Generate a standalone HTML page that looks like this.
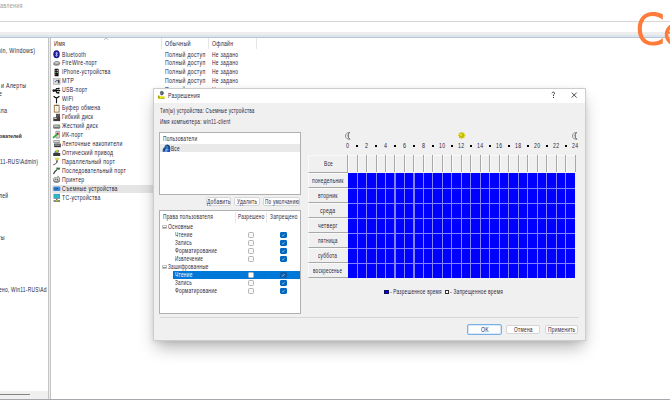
<!DOCTYPE html><html><head><meta charset="utf-8"><style>
*{box-sizing:border-box}
body{margin:0;width:670px;height:400px;position:relative;overflow:hidden;background:#fff;font-family:"Liberation Sans",sans-serif;color:#000}
.t{position:absolute;white-space:nowrap;line-height:1;transform-origin:0 0}
.p{position:absolute}
svg{position:absolute;overflow:visible}
</style></head><body>

<div class="t" style="left:-0.50px;top:2.60px;font-size:6.72px;color:#9a9a9a;letter-spacing:0.35px;transform:scaleX(0.803);">авления</div>
<div class="p" style="left:0;top:21px;width:670px;height:1px;background:#d6d6d6"></div>
<div class="p" style="left:0;top:32px;width:670px;height:6px;background:linear-gradient(#ededed 0,#ededed 45%,#dbe5f0 55%,#dbe5f0 80%,#a6b0ba 100%)"></div>
<div class="p" style="left:48px;top:38px;width:3px;height:361px;background:#ececec;border-left:1px solid #c4c4c4;border-right:1px solid #c4c4c4"></div>
<div class="p" style="left:0;top:38px;width:47px;height:353px;overflow:hidden">
<div class="t" style="left:-11.00px;top:9.60px;font-size:6.72px;color:#2a2638;letter-spacing:0.35px;transform:scaleX(0.804);">Admin, Windows)</div>
<div class="t" style="left:-26.00px;top:44.60px;font-size:6.72px;color:#2a2638;letter-spacing:0.35px;transform:scaleX(0.791);">Журналы и Алерты</div>
<div class="t" style="left:-7.80px;top:52.60px;font-size:6.72px;color:#2a2638;letter-spacing:0.35px;transform:scaleX(0.840);">ние</div>
<div class="t" style="left:-6.00px;top:70.00px;font-size:6.72px;color:#2a2638;letter-spacing:0.35px;transform:scaleX(0.811);">вила</div>
<div class="t" style="left:-3.50px;top:95.40px;font-size:6.09px;color:#2a2638;transform:scaleX(0.799);font-weight:bold">зователей</div>
<div class="t" style="left:-3.00px;top:120.60px;font-size:6.72px;color:#2a2638;letter-spacing:0.35px;transform:scaleX(0.748);">n11-RUS\Admin)</div>
<div class="t" style="left:-1.00px;top:154.80px;font-size:6.72px;color:#2a2638;letter-spacing:0.35px;transform:scaleX(0.743);">лей</div>
<div class="t" style="left:-2.50px;top:197.00px;font-size:6.72px;color:#2a2638;letter-spacing:0.35px;transform:scaleX(0.787);">ты</div>
<div class="t" style="left:-0.70px;top:248.70px;font-size:6.72px;color:#2a2638;letter-spacing:0.35px;transform:scaleX(0.725);">ено, Win11-RUS\Admin)</div>
</div>
<div class="p" style="left:0;top:391px;width:48px;height:8px;background:#f0f0f0"></div>
<div class="p" style="left:0;top:394px;width:30px;height:1.3px;background:#858585"></div>
<div class="p" style="left:0;top:398.5px;width:670px;height:1.5px;background:#a4a8ac"></div>
<div class="t" style="left:54.00px;top:41.20px;font-size:6.72px;color:#2a2638;letter-spacing:0.35px;transform:scaleX(0.798);">Имя</div>
<svg style="left:103px;top:37px" width="6" height="4"><path d="M0.8 3 L3 1 L5.2 3" stroke="#a0a8b0" stroke-width="0.7" fill="none"/></svg>
<div class="p" style="left:161px;top:38px;width:1px;height:11px;background:#e6e6e6"></div>
<div class="p" style="left:208px;top:38px;width:1px;height:11px;background:#e6e6e6"></div>
<div class="p" style="left:256px;top:38px;width:1px;height:11px;background:#e6e6e6"></div>
<div class="t" style="left:164.80px;top:41.20px;font-size:6.51px;color:#2a2638;letter-spacing:0.35px;transform:scaleX(0.829);">Обычный</div>
<div class="t" style="left:212.00px;top:41.20px;font-size:6.51px;color:#2a2638;letter-spacing:0.35px;transform:scaleX(0.787);">Офлайн</div>
<div class="p" style="left:52px;top:185px;width:102px;height:8px;background:#e5e5e5"></div>
<div class="t" style="left:61.60px;top:51.50px;font-size:6.30px;color:#2a2638;letter-spacing:0.35px;transform:scaleX(0.809);">Bluetooth</div>
<div class="t" style="left:164.80px;top:51.50px;font-size:6.30px;color:#2a2638;letter-spacing:0.35px;transform:scaleX(0.824);">Полный доступ</div>
<div class="t" style="left:211.90px;top:51.50px;font-size:6.30px;color:#2a2638;letter-spacing:0.35px;transform:scaleX(0.781);">Не задано</div>
<div class="t" style="left:61.60px;top:60.45px;font-size:6.30px;color:#2a2638;letter-spacing:0.35px;transform:scaleX(0.807);">FireWire-порт</div>
<div class="t" style="left:164.80px;top:60.45px;font-size:6.30px;color:#2a2638;letter-spacing:0.35px;transform:scaleX(0.824);">Полный доступ</div>
<div class="t" style="left:211.90px;top:60.45px;font-size:6.30px;color:#2a2638;letter-spacing:0.35px;transform:scaleX(0.781);">Не задано</div>
<div class="t" style="left:61.60px;top:69.40px;font-size:6.30px;color:#2a2638;letter-spacing:0.35px;transform:scaleX(0.810);">iPhone-устройства</div>
<div class="t" style="left:164.80px;top:69.40px;font-size:6.30px;color:#2a2638;letter-spacing:0.35px;transform:scaleX(0.824);">Полный доступ</div>
<div class="t" style="left:211.90px;top:69.40px;font-size:6.30px;color:#2a2638;letter-spacing:0.35px;transform:scaleX(0.781);">Не задано</div>
<div class="t" style="left:61.60px;top:78.35px;font-size:6.30px;color:#2a2638;letter-spacing:0.35px;transform:scaleX(0.849);">MTP</div>
<div class="t" style="left:164.80px;top:78.35px;font-size:6.30px;color:#2a2638;letter-spacing:0.35px;transform:scaleX(0.824);">Полный доступ</div>
<div class="t" style="left:211.90px;top:78.35px;font-size:6.30px;color:#2a2638;letter-spacing:0.35px;transform:scaleX(0.781);">Не задано</div>
<div class="t" style="left:61.60px;top:87.30px;font-size:6.30px;color:#2a2638;letter-spacing:0.35px;transform:scaleX(0.823);">USB-порт</div>
<div class="t" style="left:164.80px;top:87.30px;font-size:6.30px;color:#2a2638;letter-spacing:0.35px;transform:scaleX(0.824);">Полный доступ</div>
<div class="t" style="left:211.90px;top:87.30px;font-size:6.30px;color:#2a2638;letter-spacing:0.35px;transform:scaleX(0.781);">Не задано</div>
<div class="t" style="left:61.60px;top:96.25px;font-size:6.30px;color:#2a2638;letter-spacing:0.35px;transform:scaleX(0.825);">WiFi</div>
<div class="t" style="left:61.60px;top:105.20px;font-size:6.30px;color:#2a2638;letter-spacing:0.35px;transform:scaleX(0.820);">Буфер обмена</div>
<div class="t" style="left:61.60px;top:114.15px;font-size:6.30px;color:#2a2638;letter-spacing:0.35px;transform:scaleX(0.812);">Гибкий диск</div>
<div class="t" style="left:61.60px;top:123.10px;font-size:6.30px;color:#2a2638;letter-spacing:0.35px;transform:scaleX(0.815);">Жесткий диск</div>
<div class="t" style="left:61.60px;top:132.05px;font-size:6.30px;color:#2a2638;letter-spacing:0.35px;transform:scaleX(0.821);">ИК-порт</div>
<div class="t" style="left:61.60px;top:141.00px;font-size:6.30px;color:#2a2638;letter-spacing:0.35px;transform:scaleX(0.814);">Ленточные накопители</div>
<div class="t" style="left:61.60px;top:149.95px;font-size:6.30px;color:#2a2638;letter-spacing:0.35px;transform:scaleX(0.814);">Оптический привод</div>
<div class="t" style="left:61.60px;top:158.90px;font-size:6.30px;color:#2a2638;letter-spacing:0.35px;transform:scaleX(0.817);">Параллельный порт</div>
<div class="t" style="left:61.60px;top:167.85px;font-size:6.30px;color:#2a2638;letter-spacing:0.35px;transform:scaleX(0.814);">Последовательный порт</div>
<div class="t" style="left:61.60px;top:176.80px;font-size:6.30px;color:#2a2638;letter-spacing:0.35px;transform:scaleX(0.824);">Принтер</div>
<div class="t" style="left:61.60px;top:185.75px;font-size:6.30px;color:#2a2638;letter-spacing:0.35px;transform:scaleX(0.816);">Съемные устройства</div>
<div class="t" style="left:61.60px;top:194.70px;font-size:6.30px;color:#2a2638;letter-spacing:0.35px;transform:scaleX(0.814);">TC-устройства</div>
<svg style="left:52px;top:49.90px" width="9" height="9"><ellipse cx="4.5" cy="4.35" rx="3.2" ry="4" fill="#1c1c98"/><path d="M3.3 2.8 L5.6 5.4 L4.5 6.6 V2 L5.6 3.3 L3.3 5.9" stroke="#e8e8ff" stroke-width="0.55" fill="none"/></svg>
<svg style="left:52px;top:58.85px" width="9" height="9"><path d="M1.2 4.3 L3.2 2.2 Q5.5 1.8 7.6 2.8 L8.4 4.8 L6.5 6.6 Q3.5 7 1.4 6 Z" fill="#8c8c8c"/><path d="M2.4 4 L3.8 3 Q5.5 2.8 7 3.5 L6 4.8 Q4 5.2 2.4 4Z" fill="#d4d4d4"/><path d="M3 4.2 L6.5 4" stroke="#9a9a9a" stroke-width="0.4"/></svg>
<svg style="left:52px;top:67.80px" width="9" height="9"><rect x="2.6" y="0.8" width="4" height="7.5" rx="0.6" fill="#111"/><rect x="3.2" y="1.8" width="1.2" height="1.2" fill="#e020e0"/><rect x="4.8" y="1.8" width="1.2" height="1.2" fill="#d0d020"/><rect x="3.2" y="3.8" width="1.2" height="1.2" fill="#20d020"/><rect x="4.8" y="3.8" width="1.2" height="1.2" fill="#20c0c0"/><rect x="3.2" y="5.8" width="1.2" height="1.2" fill="#d02020"/></svg>
<svg style="left:52px;top:76.75px" width="9" height="9"><rect x="1.3" y="1.5" width="6.8" height="6" fill="#d8d8d8" stroke="#a0a0a0" stroke-width="0.5"/><path d="M3 5 L5 3.2 L6.8 4.8" stroke="#3a4aa0" stroke-width="0.9" fill="none"/><rect x="6.2" y="2.8" width="1.2" height="3.5" fill="#222"/></svg>
<svg style="left:52px;top:85.70px" width="9" height="9"><path d="M1.5 4.6 H8.2 M3.2 4.6 L4.6 2.6 H6.4 M3.6 4.6 L5 6.8 H6.2" stroke="#111" stroke-width="1.2" fill="none"/><circle cx="1.8" cy="4.6" r="1.3" fill="#111"/><rect x="6" y="1.8" width="1.6" height="1.6" fill="#111"/><circle cx="6.6" cy="6.8" r="0.9" fill="#111"/></svg>
<svg style="left:52px;top:94.65px" width="9" height="9"><path d="M4.5 3.5 L4.5 8.3 M1.6 1.2 Q4.5 4.5 7.4 1.2" stroke="#111" stroke-width="1.1" fill="none"/></svg>
<svg style="left:52px;top:103.60px" width="9" height="9"><rect x="2.3" y="1.3" width="4.8" height="6.8" fill="#fff" stroke="#9a6a2a" stroke-width="0.9"/><rect x="3.6" y="0.8" width="2.2" height="1" fill="#555"/><path d="M4.7 2.5 V7" stroke="#c0c0c0" stroke-width="0.5"/></svg>
<svg style="left:52px;top:112.55px" width="9" height="9"><rect x="4" y="0.8" width="4" height="5" fill="#555"/><rect x="1.3" y="4.3" width="6.8" height="3.8" fill="#3a3a3a"/><rect x="1.8" y="4.8" width="3" height="1.2" fill="#bbb"/><rect x="5.8" y="5" width="1" height="0.8" fill="#d02020"/></svg>
<svg style="left:52px;top:121.50px" width="9" height="9"><rect x="1.2" y="2.5" width="7" height="4.3" rx="1.2" fill="#777"/><rect x="2" y="3.3" width="5.4" height="1.5" fill="#c8c8c8"/><rect x="5.5" y="3.5" width="1.3" height="1" fill="#40c040"/></svg>
<svg style="left:52px;top:130.45px" width="9" height="9"><rect x="3.5" y="0.8" width="4.3" height="7.6" rx="1" fill="#8a8a8a"/><rect x="4.2" y="1.5" width="3" height="6.2" fill="#d0d0d0"/><circle cx="5.7" cy="3.8" r="1.1" fill="#d01010"/><path d="M1 7.8 L5 4.3" stroke="#20b020" stroke-width="1.6"/></svg>
<svg style="left:52px;top:139.40px" width="9" height="9"><rect x="1.3" y="1" width="6.5" height="3.3" rx="0.8" fill="#9a9a9a"/><rect x="2" y="1.8" width="4.8" height="1" fill="#e8e8e8"/><rect x="2.2" y="4.6" width="6.6" height="3.6" fill="#3a3a3a"/><rect x="3" y="5.4" width="4.8" height="1.4" fill="#9a9a9a"/></svg>
<svg style="left:52px;top:148.35px" width="9" height="9"><rect x="1.2" y="5" width="7" height="3" fill="#3a3a3a"/><path d="M2 5 Q4 1 7 2 Q8 4 6 5 Z" fill="#8a8a8a"/><circle cx="4.8" cy="3" r="1.2" fill="#c8d020"/><circle cx="3.5" cy="4" r="0.9" fill="#20a0e0"/></svg>
<svg style="left:52px;top:157.30px" width="9" height="9"><path d="M2.5 0.8 H7.5 L6.3 3.5 H3.7 Z" fill="#d8d860"/><rect x="4" y="3.3" width="2" height="2" fill="#777"/><path d="M5 5 Q4 7.5 1.2 7.8" stroke="#555" stroke-width="1" fill="none"/></svg>
<svg style="left:52px;top:166.25px" width="9" height="9"><path d="M4.3 1.5 L8.3 1.8 L7.5 3.8 L4.5 3.5 Z" fill="#2a7a2a"/><path d="M5 3.6 L3 5.5 L1.5 8" stroke="#444" stroke-width="1.3" fill="none"/></svg>
<svg style="left:52px;top:175.20px" width="9" height="9"><ellipse cx="4.6" cy="5" rx="3.6" ry="3" fill="#8a8a8a"/><ellipse cx="4.6" cy="4.3" rx="2.8" ry="1.8" fill="#d8d8d8"/><circle cx="3.6" cy="4.2" r="0.8" fill="#30a030"/><circle cx="5.4" cy="4.6" r="0.8" fill="#d03030"/><path d="M5 1.2 Q7.5 1 7.6 3.5" stroke="#555" stroke-width="0.5" fill="none"/></svg>
<svg style="left:52px;top:184.15px" width="9" height="9"><rect x="1.2" y="2.6" width="7.2" height="4.4" rx="1.3" fill="#3d8ad8"/><rect x="2.5" y="4" width="3.5" height="1.5" fill="#1d5aa8"/></svg>
<svg style="left:52px;top:193.10px" width="9" height="9"><rect x="1.5" y="0.8" width="6.5" height="5" fill="#7a7ac0"/><rect x="2.3" y="1.5" width="5" height="3.6" fill="#20c0c0"/><path d="M4.75 5.8 V7.5 M1.5 8 H8" stroke="#111" stroke-width="1"/><circle cx="4.75" cy="7.6" r="1" fill="#c0c020"/></svg>
<svg style="left:0;top:0" width="670" height="400"><path d="M662.8 14.3 C659.5 12.6 656 12 652.7 12 C643.5 12 637.7 19 637.7 28.8 C637.7 39 643.5 45.6 652.5 45.6 C656.5 45.6 660 44.8 662.8 43.5 L662.8 37.9 C660 40.5 656 41.7 652.3 41.7 C645.5 41.7 641.9 36.5 641.9 28.8 C641.9 21 645.5 15.9 652.3 15.9 C656 15.9 660 17.2 662.8 19.7 Z" fill="#ff7b3a"/><ellipse cx="676" cy="34.5" rx="9.5" ry="9.75" stroke="#ff7b3a" stroke-width="3.5" fill="none"/><path d="M666 32.6 H690" stroke="#ff7b3a" stroke-width="2.2"/></svg>
<div class="p" style="left:153px;top:88px;width:433px;height:253px;background:#f0f0f0;border:1px solid #cdcdcd;box-shadow:0 9px 16px -3px rgba(0,0,0,.30),0 1px 5px rgba(0,0,0,.08)"></div>
<div class="p" style="left:154px;top:89px;width:431px;height:13.8px;background:#fff"></div>
<svg style="left:156px;top:90px" width="10" height="10"><path d="M4 2.5 Q4.5 0.6 6.3 0.9 Q8.2 1.5 7.8 3.6 Q7.4 5.2 5.6 5.4 Q3.8 5 4 2.5Z" fill="#5a5a6a"/><circle cx="6" cy="1.9" r="0.8" fill="#50a050"/><circle cx="5" cy="3.6" r="0.7" fill="#c070a0"/><circle cx="6.5" cy="3.9" r="0.7" fill="#6a50b0"/><path d="M1.8 6.2 Q2 5 3.3 5.2 L3.6 6.3 H8.8 V8.4 H5.5 L4.8 9 H2.2 Q1.6 8.5 1.8 6.2Z" fill="#e2e014"/><path d="M2.6 5.6 L3.2 8.4" stroke="#3a3a20" stroke-width="0.6"/><path d="M5 8.6 H8.5" stroke="#6a6a50" stroke-width="0.5"/></svg>
<div class="t" style="left:168.00px;top:93.40px;font-size:6.72px;color:#2a2638;letter-spacing:0.35px;transform:scaleX(0.760);">Разрешения</div>
<svg style="left:550px;top:91px" width="30" height="8"><path d="M1.9 2.3 Q2.4 1 3.5 1.1 Q4.8 1.3 4.5 2.7 Q4.2 3.4 3.5 3.9 L3.4 5" stroke="#3a3a3a" stroke-width="0.95" fill="none"/><circle cx="3.4" cy="6.4" r="0.55" fill="#3a3a3a"/><path d="M21.7 1.6 L26.7 6.6 M26.7 1.6 L21.7 6.6" stroke="#404040" stroke-width="0.95"/></svg>
<div class="t" style="left:159.50px;top:108.00px;font-size:6.51px;color:#2a2638;letter-spacing:0.35px;transform:scaleX(0.697);">Тип(ы) устройства: Съемные устройства</div>
<div class="t" style="left:159.50px;top:118.80px;font-size:6.51px;color:#2a2638;letter-spacing:0.35px;transform:scaleX(0.720);">Имя компьютера: win11-client</div>
<div class="p" style="left:159px;top:132px;width:142px;height:63px;background:#fff;border:1px solid #b0b0b0"></div>
<div class="t" style="left:162.90px;top:135.70px;font-size:6.51px;color:#2a2638;letter-spacing:0.35px;transform:scaleX(0.736);">Пользователи</div>
<div class="p" style="left:160px;top:144px;width:140px;height:8px;background:#e9e9e9"></div>
<svg style="left:161.5px;top:143.5px" width="9" height="9"><path d="M0.7 7.8 Q0.5 4.2 2.4 3.6 Q2.4 1 4.9 0.6 Q7.9 0.4 8.3 3.1 Q8.5 5.2 8 7.8 Z" fill="#1d4c8e"/><path d="M2.8 7.8 Q2.9 4.6 4.9 4.1 Q6.9 4.6 7 7.8Z" fill="#66aaea"/><circle cx="4.9" cy="3" r="1.2" fill="#3a78c0"/><rect x="5.3" y="6.3" width="2.4" height="1.5" fill="#1c3ad0"/></svg>
<div class="t" style="left:170.70px;top:145.80px;font-size:6.51px;color:#2a2638;letter-spacing:0.35px;transform:scaleX(0.713);">Все</div>
<div class="p" style="left:205.7px;top:196.8px;width:25.7px;height:9.5px;background:#fdfdfd;border:1px solid #d6d6d6;border-radius:2px;"></div>
<div class="t" style="left:206.85px;top:199.30px;font-size:6.51px;color:#2a2638;letter-spacing:0.35px;transform:scaleX(0.750);">Добавить</div>
<div class="p" style="left:234px;top:196.8px;width:26.2px;height:9.5px;background:#fdfdfd;border:1px solid #d6d6d6;border-radius:2px;"></div>
<div class="t" style="left:237.10px;top:199.30px;font-size:6.51px;color:#2a2638;letter-spacing:0.35px;transform:scaleX(0.742);">Удалить</div>
<div class="p" style="left:263px;top:196.8px;width:37.2px;height:9.5px;background:#fdfdfd;border:1px solid #d6d6d6;border-radius:2px;"></div>
<div class="t" style="left:264.60px;top:199.30px;font-size:6.51px;color:#2a2638;letter-spacing:0.35px;transform:scaleX(0.710);">По умолчанию</div>
<div class="p" style="left:159px;top:210px;width:142px;height:103.5px;background:#fff;border:1px solid #b0b0b0"></div>
<div class="t" style="left:163.10px;top:214.20px;font-size:6.51px;color:#2a2638;letter-spacing:0.35px;transform:scaleX(0.733);">Права пользователя</div>
<div class="p" style="left:234.5px;top:212px;width:1px;height:11px;background:#e6e6e6"></div>
<div class="p" style="left:266.2px;top:212px;width:1px;height:11px;background:#e6e6e6"></div>
<div class="t" style="left:237.50px;top:214.20px;font-size:6.51px;color:#2a2638;letter-spacing:0.35px;transform:scaleX(0.715);">Разрешено</div>
<div class="t" style="left:269.80px;top:214.20px;font-size:6.51px;color:#2a2638;letter-spacing:0.35px;transform:scaleX(0.736);">Запрещено</div>
<div class="p" style="left:173.2px;top:271px;width:127px;height:8px;background:#0078d7"></div>
<div class="p" style="left:267px;top:271px;width:0.8px;height:8px;background:#3a6a9a"></div>
<div class="p" style="left:162.2px;top:224.70px;width:4.6px;height:4.6px;border:0.6px solid #c4c4c4;background:#fbfbfb"></div>
<div class="p" style="left:163.3px;top:226.70px;width:2.4px;height:0.6px;background:#8a8a8a"></div>
<div class="t" style="left:168.00px;top:224.40px;font-size:6.51px;color:#2a2638;letter-spacing:0.35px;transform:scaleX(0.750);">Основные</div>
<div class="t" style="left:174.60px;top:232.40px;font-size:6.51px;color:#2a2638;letter-spacing:0.35px;transform:scaleX(0.741);">Чтение</div>
<div class="p" style="left:247.6px;top:231.50px;width:6.3px;height:6.1px;border:0.7px solid #b4b4b4;border-radius:1.4px;background:#f8f8f8"></div>
<div class="p" style="left:280.3px;top:231.50px;width:6.3px;height:6.1px;border-radius:1.4px;background:#0067c0"></div>
<svg style="left:280.3px;top:231.50px" width="6.3" height="6.1"><path d="M1.8 3.3 L2.8 4.2 L4.6 2" stroke="#fff" stroke-width="0.6" fill="none" opacity="0.85"/></svg>
<div class="t" style="left:174.60px;top:240.40px;font-size:6.51px;color:#2a2638;letter-spacing:0.35px;transform:scaleX(0.718);">Запись</div>
<div class="p" style="left:247.6px;top:239.50px;width:6.3px;height:6.1px;border:0.7px solid #b4b4b4;border-radius:1.4px;background:#f8f8f8"></div>
<div class="p" style="left:280.3px;top:239.50px;width:6.3px;height:6.1px;border-radius:1.4px;background:#0067c0"></div>
<svg style="left:280.3px;top:239.50px" width="6.3" height="6.1"><path d="M1.8 3.3 L2.8 4.2 L4.6 2" stroke="#fff" stroke-width="0.6" fill="none" opacity="0.85"/></svg>
<div class="t" style="left:174.60px;top:248.40px;font-size:6.51px;color:#2a2638;letter-spacing:0.35px;transform:scaleX(0.745);">Форматирование</div>
<div class="p" style="left:247.6px;top:247.50px;width:6.3px;height:6.1px;border:0.7px solid #b4b4b4;border-radius:1.4px;background:#f8f8f8"></div>
<div class="p" style="left:280.3px;top:247.50px;width:6.3px;height:6.1px;border-radius:1.4px;background:#0067c0"></div>
<svg style="left:280.3px;top:247.50px" width="6.3" height="6.1"><path d="M1.8 3.3 L2.8 4.2 L4.6 2" stroke="#fff" stroke-width="0.6" fill="none" opacity="0.85"/></svg>
<div class="t" style="left:174.60px;top:256.40px;font-size:6.51px;color:#2a2638;letter-spacing:0.35px;transform:scaleX(0.714);">Извлечение</div>
<div class="p" style="left:247.6px;top:255.50px;width:6.3px;height:6.1px;border:0.7px solid #b4b4b4;border-radius:1.4px;background:#f8f8f8"></div>
<div class="p" style="left:280.3px;top:255.50px;width:6.3px;height:6.1px;border-radius:1.4px;background:#0067c0"></div>
<svg style="left:280.3px;top:255.50px" width="6.3" height="6.1"><path d="M1.8 3.3 L2.8 4.2 L4.6 2" stroke="#fff" stroke-width="0.6" fill="none" opacity="0.85"/></svg>
<div class="p" style="left:162.2px;top:264.70px;width:4.6px;height:4.6px;border:0.6px solid #c4c4c4;background:#fbfbfb"></div>
<div class="p" style="left:163.3px;top:266.70px;width:2.4px;height:0.6px;background:#8a8a8a"></div>
<div class="t" style="left:168.00px;top:264.40px;font-size:6.51px;color:#2a2638;letter-spacing:0.35px;transform:scaleX(0.727);">Зашифрованные</div>
<div class="t" style="left:174.60px;top:272.40px;font-size:6.51px;color:#fff;letter-spacing:0.35px;transform:scaleX(0.741);">Чтение</div>
<div class="p" style="left:247.6px;top:271.50px;width:6.3px;height:6.1px;border:0.7px solid #b4b4b4;border-radius:1.4px;background:#fff"></div>
<div class="p" style="left:280.3px;top:271.50px;width:6.3px;height:6.1px;border-radius:1.4px;background:#0d5ba8"></div>
<svg style="left:280.3px;top:271.50px" width="6.3" height="6.1"><path d="M1.8 3.3 L2.8 4.2 L4.6 2" stroke="#fff" stroke-width="0.6" fill="none" opacity="0.85"/></svg>
<div class="t" style="left:174.60px;top:280.40px;font-size:6.51px;color:#2a2638;letter-spacing:0.35px;transform:scaleX(0.718);">Запись</div>
<div class="p" style="left:247.6px;top:279.50px;width:6.3px;height:6.1px;border:0.7px solid #b4b4b4;border-radius:1.4px;background:#f8f8f8"></div>
<div class="p" style="left:280.3px;top:279.50px;width:6.3px;height:6.1px;border-radius:1.4px;background:#0067c0"></div>
<svg style="left:280.3px;top:279.50px" width="6.3" height="6.1"><path d="M1.8 3.3 L2.8 4.2 L4.6 2" stroke="#fff" stroke-width="0.6" fill="none" opacity="0.85"/></svg>
<div class="t" style="left:174.60px;top:288.40px;font-size:6.51px;color:#2a2638;letter-spacing:0.35px;transform:scaleX(0.745);">Форматирование</div>
<div class="p" style="left:247.6px;top:287.50px;width:6.3px;height:6.1px;border:0.7px solid #b4b4b4;border-radius:1.4px;background:#f8f8f8"></div>
<div class="p" style="left:280.3px;top:287.50px;width:6.3px;height:6.1px;border-radius:1.4px;background:#0067c0"></div>
<svg style="left:280.3px;top:287.50px" width="6.3" height="6.1"><path d="M1.8 3.3 L2.8 4.2 L4.6 2" stroke="#fff" stroke-width="0.6" fill="none" opacity="0.85"/></svg>
<div class="p" style="left:159.5px;top:317px;width:419px;height:1px;background:#d8d8d8"></div>
<div class="p" style="left:467.3px;top:324.2px;width:35.1px;height:10.4px;background:#fdfdfd;border:1px solid #78b0e6;border-radius:2px;box-shadow:inset 0 0 0 0.6px #b8d8f4;"></div>
<div class="t" style="left:481.05px;top:326.90px;font-size:6.51px;color:#2a2638;letter-spacing:0.35px;transform:scaleX(0.779);">OK</div>
<div class="p" style="left:506.4px;top:324.6px;width:33.8px;height:9.8px;background:#fdfdfd;border:1px solid #d6d6d6;border-radius:2px;"></div>
<div class="t" style="left:514.05px;top:326.90px;font-size:6.51px;color:#2a2638;letter-spacing:0.35px;transform:scaleX(0.737);">Отмена</div>
<div class="p" style="left:544.6px;top:324.6px;width:33.7px;height:9.8px;background:#fdfdfd;border:1px solid #d6d6d6;border-radius:2px;"></div>
<div class="t" style="left:547.85px;top:326.90px;font-size:6.51px;color:#2a2638;letter-spacing:0.35px;transform:scaleX(0.746);">Применить</div>
<svg style="left:345px;top:131.8px" width="6" height="8"><path d="M4.6 0.4 Q0.4 0.8 0.5 4 Q0.7 7.3 5 7.3" stroke="#707070" stroke-width="0.75" fill="none"/><path d="M4.6 0.4 Q3 2 3.1 4 Q3.2 6.2 5 7.3" stroke="#383838" stroke-width="0.8" fill="none"/><circle cx="2.2" cy="3.6" r="0.45" fill="#777"/></svg>
<svg style="left:572px;top:131.8px" width="6" height="8"><path d="M4.6 0.4 Q0.4 0.8 0.5 4 Q0.7 7.3 5 7.3" stroke="#707070" stroke-width="0.75" fill="none"/><path d="M4.6 0.4 Q3 2 3.1 4 Q3.2 6.2 5 7.3" stroke="#383838" stroke-width="0.8" fill="none"/><circle cx="2.2" cy="3.6" r="0.45" fill="#777"/></svg>
<svg style="left:456.5px;top:131.3px" width="9.5" height="9"><path d="M4.6 0.6 L5.6 1.8 L7.3 1.5 L7.3 3.2 L8.6 4.3 L7.4 5.4 L7.6 7.1 L5.9 7 L4.8 8.3 L3.7 7.1 L2 7.3 L2 5.6 L0.7 4.5 L1.9 3.4 L1.8 1.7 L3.5 1.8 Z" fill="#d8d000"/><circle cx="4.6" cy="4.4" r="2.3" fill="#c0b800"/><circle cx="4" cy="3.8" r="1" fill="#f0f060"/></svg>
<div class="t" style="left:346.10px;top:143.00px;font-size:6.51px;color:#2a2638;letter-spacing:0.35px;transform:scaleX(0.829);">0</div>
<div class="p" style="left:356.08px;top:144.8px;width:2px;height:2px;background:#000"></div>
<div class="t" style="left:365.05px;top:143.00px;font-size:6.51px;color:#2a2638;letter-spacing:0.35px;transform:scaleX(0.829);">2</div>
<div class="p" style="left:375.03px;top:144.8px;width:2px;height:2px;background:#000"></div>
<div class="t" style="left:384.00px;top:143.00px;font-size:6.51px;color:#2a2638;letter-spacing:0.35px;transform:scaleX(0.829);">4</div>
<div class="p" style="left:393.98px;top:144.8px;width:2px;height:2px;background:#000"></div>
<div class="t" style="left:402.95px;top:143.00px;font-size:6.51px;color:#2a2638;letter-spacing:0.35px;transform:scaleX(0.829);">6</div>
<div class="p" style="left:412.93px;top:144.8px;width:2px;height:2px;background:#000"></div>
<div class="t" style="left:421.90px;top:143.00px;font-size:6.51px;color:#2a2638;letter-spacing:0.35px;transform:scaleX(0.829);">8</div>
<div class="p" style="left:431.88px;top:144.8px;width:2px;height:2px;background:#000"></div>
<div class="t" style="left:439.35px;top:143.00px;font-size:6.51px;color:#2a2638;letter-spacing:0.35px;transform:scaleX(0.790);">10</div>
<div class="p" style="left:450.83px;top:144.8px;width:2px;height:2px;background:#000"></div>
<div class="t" style="left:458.30px;top:143.00px;font-size:6.51px;color:#2a2638;letter-spacing:0.35px;transform:scaleX(0.790);">12</div>
<div class="p" style="left:469.78px;top:144.8px;width:2px;height:2px;background:#000"></div>
<div class="t" style="left:477.25px;top:143.00px;font-size:6.51px;color:#2a2638;letter-spacing:0.35px;transform:scaleX(0.790);">14</div>
<div class="p" style="left:488.73px;top:144.8px;width:2px;height:2px;background:#000"></div>
<div class="t" style="left:496.20px;top:143.00px;font-size:6.51px;color:#2a2638;letter-spacing:0.35px;transform:scaleX(0.790);">16</div>
<div class="p" style="left:507.68px;top:144.8px;width:2px;height:2px;background:#000"></div>
<div class="t" style="left:515.15px;top:143.00px;font-size:6.51px;color:#2a2638;letter-spacing:0.35px;transform:scaleX(0.790);">18</div>
<div class="p" style="left:526.62px;top:144.8px;width:2px;height:2px;background:#000"></div>
<div class="t" style="left:534.10px;top:143.00px;font-size:6.51px;color:#2a2638;letter-spacing:0.35px;transform:scaleX(0.790);">20</div>
<div class="p" style="left:545.58px;top:144.8px;width:2px;height:2px;background:#000"></div>
<div class="t" style="left:553.05px;top:143.00px;font-size:6.51px;color:#2a2638;letter-spacing:0.35px;transform:scaleX(0.790);">22</div>
<div class="p" style="left:564.52px;top:144.8px;width:2px;height:2px;background:#000"></div>
<div class="t" style="left:572.00px;top:143.00px;font-size:6.51px;color:#2a2638;letter-spacing:0.35px;transform:scaleX(0.790);">24</div>
<div class="p" style="left:308px;top:155.3px;width:39.6px;height:17.7px;background:#f0f0f0;border-top:1px solid #fafafa;border-left:1px solid #fafafa;border-bottom:1px solid #a8a8a8"></div>
<div class="t" style="left:323.50px;top:161.30px;font-size:6.51px;color:#2a2638;letter-spacing:0.35px;transform:scaleX(0.722);">Все</div>
<div class="p" style="left:347.60px;top:155.3px;width:227.40px;height:0.8px;background:#fafafa"></div>
<div class="p" style="left:347.10px;top:155.3px;width:1px;height:17.2px;background:#a8a8a8"></div>
<div class="p" style="left:348.10px;top:155.3px;width:0.8px;height:17.2px;background:#fafafa"></div>
<div class="p" style="left:356.58px;top:155.3px;width:1px;height:17.2px;background:#a8a8a8"></div>
<div class="p" style="left:357.58px;top:155.3px;width:0.8px;height:17.2px;background:#fafafa"></div>
<div class="p" style="left:366.05px;top:155.3px;width:1px;height:17.2px;background:#a8a8a8"></div>
<div class="p" style="left:367.05px;top:155.3px;width:0.8px;height:17.2px;background:#fafafa"></div>
<div class="p" style="left:375.53px;top:155.3px;width:1px;height:17.2px;background:#a8a8a8"></div>
<div class="p" style="left:376.53px;top:155.3px;width:0.8px;height:17.2px;background:#fafafa"></div>
<div class="p" style="left:385.00px;top:155.3px;width:1px;height:17.2px;background:#a8a8a8"></div>
<div class="p" style="left:386.00px;top:155.3px;width:0.8px;height:17.2px;background:#fafafa"></div>
<div class="p" style="left:394.48px;top:155.3px;width:1px;height:17.2px;background:#a8a8a8"></div>
<div class="p" style="left:395.48px;top:155.3px;width:0.8px;height:17.2px;background:#fafafa"></div>
<div class="p" style="left:403.95px;top:155.3px;width:1px;height:17.2px;background:#a8a8a8"></div>
<div class="p" style="left:404.95px;top:155.3px;width:0.8px;height:17.2px;background:#fafafa"></div>
<div class="p" style="left:413.43px;top:155.3px;width:1px;height:17.2px;background:#a8a8a8"></div>
<div class="p" style="left:414.43px;top:155.3px;width:0.8px;height:17.2px;background:#fafafa"></div>
<div class="p" style="left:422.90px;top:155.3px;width:1px;height:17.2px;background:#a8a8a8"></div>
<div class="p" style="left:423.90px;top:155.3px;width:0.8px;height:17.2px;background:#fafafa"></div>
<div class="p" style="left:432.38px;top:155.3px;width:1px;height:17.2px;background:#a8a8a8"></div>
<div class="p" style="left:433.38px;top:155.3px;width:0.8px;height:17.2px;background:#fafafa"></div>
<div class="p" style="left:441.85px;top:155.3px;width:1px;height:17.2px;background:#a8a8a8"></div>
<div class="p" style="left:442.85px;top:155.3px;width:0.8px;height:17.2px;background:#fafafa"></div>
<div class="p" style="left:451.33px;top:155.3px;width:1px;height:17.2px;background:#a8a8a8"></div>
<div class="p" style="left:452.33px;top:155.3px;width:0.8px;height:17.2px;background:#fafafa"></div>
<div class="p" style="left:460.80px;top:155.3px;width:1px;height:17.2px;background:#a8a8a8"></div>
<div class="p" style="left:461.80px;top:155.3px;width:0.8px;height:17.2px;background:#fafafa"></div>
<div class="p" style="left:470.28px;top:155.3px;width:1px;height:17.2px;background:#a8a8a8"></div>
<div class="p" style="left:471.28px;top:155.3px;width:0.8px;height:17.2px;background:#fafafa"></div>
<div class="p" style="left:479.75px;top:155.3px;width:1px;height:17.2px;background:#a8a8a8"></div>
<div class="p" style="left:480.75px;top:155.3px;width:0.8px;height:17.2px;background:#fafafa"></div>
<div class="p" style="left:489.23px;top:155.3px;width:1px;height:17.2px;background:#a8a8a8"></div>
<div class="p" style="left:490.23px;top:155.3px;width:0.8px;height:17.2px;background:#fafafa"></div>
<div class="p" style="left:498.70px;top:155.3px;width:1px;height:17.2px;background:#a8a8a8"></div>
<div class="p" style="left:499.70px;top:155.3px;width:0.8px;height:17.2px;background:#fafafa"></div>
<div class="p" style="left:508.18px;top:155.3px;width:1px;height:17.2px;background:#a8a8a8"></div>
<div class="p" style="left:509.18px;top:155.3px;width:0.8px;height:17.2px;background:#fafafa"></div>
<div class="p" style="left:517.65px;top:155.3px;width:1px;height:17.2px;background:#a8a8a8"></div>
<div class="p" style="left:518.65px;top:155.3px;width:0.8px;height:17.2px;background:#fafafa"></div>
<div class="p" style="left:527.12px;top:155.3px;width:1px;height:17.2px;background:#a8a8a8"></div>
<div class="p" style="left:528.12px;top:155.3px;width:0.8px;height:17.2px;background:#fafafa"></div>
<div class="p" style="left:536.60px;top:155.3px;width:1px;height:17.2px;background:#a8a8a8"></div>
<div class="p" style="left:537.60px;top:155.3px;width:0.8px;height:17.2px;background:#fafafa"></div>
<div class="p" style="left:546.08px;top:155.3px;width:1px;height:17.2px;background:#a8a8a8"></div>
<div class="p" style="left:547.08px;top:155.3px;width:0.8px;height:17.2px;background:#fafafa"></div>
<div class="p" style="left:555.55px;top:155.3px;width:1px;height:17.2px;background:#a8a8a8"></div>
<div class="p" style="left:556.55px;top:155.3px;width:0.8px;height:17.2px;background:#fafafa"></div>
<div class="p" style="left:565.02px;top:155.3px;width:1px;height:17.2px;background:#a8a8a8"></div>
<div class="p" style="left:566.02px;top:155.3px;width:0.8px;height:17.2px;background:#fafafa"></div>
<div class="p" style="left:574.50px;top:155.3px;width:1px;height:17.2px;background:#a8a8a8"></div>
<div class="p" style="left:347.60px;top:172.5px;width:227.80px;height:105.50px;background:#0000ff"></div>
<div class="p" style="left:356.58px;top:172.5px;width:1.1px;height:105.50px;background:#8282ff"></div>
<div class="p" style="left:366.05px;top:172.5px;width:1.1px;height:105.50px;background:#8282ff"></div>
<div class="p" style="left:375.53px;top:172.5px;width:1.1px;height:105.50px;background:#8282ff"></div>
<div class="p" style="left:385.00px;top:172.5px;width:1.1px;height:105.50px;background:#8282ff"></div>
<div class="p" style="left:394.48px;top:172.5px;width:1.1px;height:105.50px;background:#8282ff"></div>
<div class="p" style="left:403.95px;top:172.5px;width:1.1px;height:105.50px;background:#8282ff"></div>
<div class="p" style="left:413.43px;top:172.5px;width:1.1px;height:105.50px;background:#8282ff"></div>
<div class="p" style="left:422.90px;top:172.5px;width:1.1px;height:105.50px;background:#8282ff"></div>
<div class="p" style="left:432.38px;top:172.5px;width:1.1px;height:105.50px;background:#8282ff"></div>
<div class="p" style="left:441.85px;top:172.5px;width:1.1px;height:105.50px;background:#8282ff"></div>
<div class="p" style="left:451.33px;top:172.5px;width:1.1px;height:105.50px;background:#8282ff"></div>
<div class="p" style="left:460.80px;top:172.5px;width:1.1px;height:105.50px;background:#8282ff"></div>
<div class="p" style="left:470.28px;top:172.5px;width:1.1px;height:105.50px;background:#8282ff"></div>
<div class="p" style="left:479.75px;top:172.5px;width:1.1px;height:105.50px;background:#8282ff"></div>
<div class="p" style="left:489.23px;top:172.5px;width:1.1px;height:105.50px;background:#8282ff"></div>
<div class="p" style="left:498.70px;top:172.5px;width:1.1px;height:105.50px;background:#8282ff"></div>
<div class="p" style="left:508.18px;top:172.5px;width:1.1px;height:105.50px;background:#8282ff"></div>
<div class="p" style="left:517.65px;top:172.5px;width:1.1px;height:105.50px;background:#8282ff"></div>
<div class="p" style="left:527.12px;top:172.5px;width:1.1px;height:105.50px;background:#8282ff"></div>
<div class="p" style="left:536.60px;top:172.5px;width:1.1px;height:105.50px;background:#8282ff"></div>
<div class="p" style="left:546.08px;top:172.5px;width:1.1px;height:105.50px;background:#8282ff"></div>
<div class="p" style="left:555.55px;top:172.5px;width:1.1px;height:105.50px;background:#8282ff"></div>
<div class="p" style="left:565.02px;top:172.5px;width:1.1px;height:105.50px;background:#8282ff"></div>
<div class="p" style="left:308px;top:172.90px;width:39.6px;height:15.07px;background:#f0f0f0;border-top:1px solid #fafafa;border-left:1px solid #fafafa;border-bottom:1px solid #a8a8a8"></div>
<div class="t" style="left:312.05px;top:177.74px;font-size:6.51px;color:#2a2638;letter-spacing:0.35px;transform:scaleX(0.747);">понедельник</div>
<div class="p" style="left:347.60px;top:187.67px;width:227.40px;height:1.1px;background:#8282ff"></div>
<div class="p" style="left:308px;top:187.97px;width:39.6px;height:15.07px;background:#f0f0f0;border-top:1px solid #fafafa;border-left:1px solid #fafafa;border-bottom:1px solid #a8a8a8"></div>
<div class="t" style="left:318.05px;top:192.81px;font-size:6.51px;color:#2a2638;letter-spacing:0.35px;transform:scaleX(0.760);">вторник</div>
<div class="p" style="left:347.60px;top:202.74px;width:227.40px;height:1.1px;background:#8282ff"></div>
<div class="p" style="left:308px;top:203.04px;width:39.6px;height:15.07px;background:#f0f0f0;border-top:1px solid #fafafa;border-left:1px solid #fafafa;border-bottom:1px solid #a8a8a8"></div>
<div class="t" style="left:320.30px;top:207.88px;font-size:6.51px;color:#2a2638;letter-spacing:0.35px;transform:scaleX(0.782);">среда</div>
<div class="p" style="left:347.60px;top:217.81px;width:227.40px;height:1.1px;background:#8282ff"></div>
<div class="p" style="left:308px;top:218.11px;width:39.6px;height:15.07px;background:#f0f0f0;border-top:1px solid #fafafa;border-left:1px solid #fafafa;border-bottom:1px solid #a8a8a8"></div>
<div class="t" style="left:318.05px;top:222.95px;font-size:6.51px;color:#2a2638;letter-spacing:0.35px;transform:scaleX(0.784);">четверг</div>
<div class="p" style="left:347.60px;top:232.89px;width:227.40px;height:1.1px;background:#8282ff"></div>
<div class="p" style="left:308px;top:233.19px;width:39.6px;height:15.07px;background:#f0f0f0;border-top:1px solid #fafafa;border-left:1px solid #fafafa;border-bottom:1px solid #a8a8a8"></div>
<div class="t" style="left:318.05px;top:238.02px;font-size:6.51px;color:#2a2638;letter-spacing:0.35px;transform:scaleX(0.730);">пятница</div>
<div class="p" style="left:347.60px;top:247.96px;width:227.40px;height:1.1px;background:#8282ff"></div>
<div class="p" style="left:308px;top:248.26px;width:39.6px;height:15.07px;background:#f0f0f0;border-top:1px solid #fafafa;border-left:1px solid #fafafa;border-bottom:1px solid #a8a8a8"></div>
<div class="t" style="left:318.30px;top:253.09px;font-size:6.51px;color:#2a2638;letter-spacing:0.35px;transform:scaleX(0.727);">суббота</div>
<div class="p" style="left:347.60px;top:263.03px;width:227.40px;height:1.1px;background:#8282ff"></div>
<div class="p" style="left:308px;top:263.33px;width:39.6px;height:15.07px;background:#f0f0f0;border-top:1px solid #fafafa;border-left:1px solid #fafafa;border-bottom:1px solid #a8a8a8"></div>
<div class="t" style="left:313.30px;top:268.16px;font-size:6.51px;color:#2a2638;letter-spacing:0.35px;transform:scaleX(0.702);">воскресенье</div>
<div class="p" style="left:384.4px;top:289.8px;width:4.7px;height:4.4px;background:#0000ff;border:0.6px solid #101050"></div>
<div class="t" style="left:390.20px;top:289.20px;font-size:6.51px;color:#2a2638;letter-spacing:0.35px;transform:scaleX(0.718);">- Разрешенное время</div>
<div class="p" style="left:444.7px;top:289.8px;width:4.4px;height:4.4px;background:#fff;border:0.7px solid #333"></div>
<div class="t" style="left:449.90px;top:289.20px;font-size:6.51px;color:#2a2638;letter-spacing:0.35px;transform:scaleX(0.729);">- Запрещенное время</div>
</body></html>
